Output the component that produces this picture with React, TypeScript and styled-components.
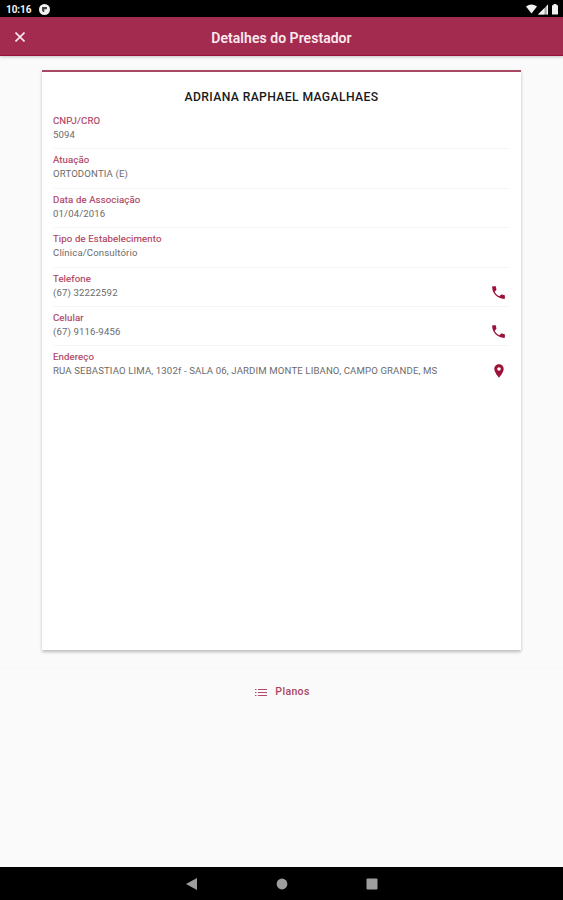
import React from "react";
import styled, { createGlobalStyle } from "styled-components";

const GlobalStyle = createGlobalStyle`
  * { box-sizing: border-box; }
  body { margin: 0; background: #fafafa; font-family: Roboto, "Liberation Sans", sans-serif; }
`;

const Screen = styled.div`
  width: 563px;
  height: 900px;
  display: flex;
  flex-direction: column;
  overflow: hidden;
  background: #fafafa;
`;

const StatusBar = styled.div`
  flex: none;
  height: 17px;
  padding: 1px 4px 0 6px;
  display: flex;
  align-items: center;
  background: #000;
  color: #f2f2f2;
`;

const Clock = styled.span`
  font-size: 10px;
  line-height: 12px;
  font-weight: 700;
  width: 33px;
  padding-top: 1px;
  letter-spacing: -0.1px;
`;

const StatusIcons = styled.div`
  margin-left: auto;
  display: flex;
  align-items: center;
  gap: 1px;
`;

const Header = styled.header`
  flex: none;
  height: 39px;
  display: grid;
  grid-template-columns: 40px 1fr 40px;
  align-items: center;
  background: #a32b50;
  border-bottom: 1px solid #94113b;
  box-shadow: 0 1px 3px rgba(0, 0, 0, 0.22);
  z-index: 1;
`;

const CloseButton = styled.button`
  border: 0;
  padding: 2px 0 0;
  background: none;
  height: 38px;
  display: grid;
  place-items: center;
`;

const Title = styled.h1`
  margin: 3px 0 0;
  text-align: center;
  color: #fbe9ee;
  font-size: 14px;
  line-height: 18px;
  font-weight: 600;
  letter-spacing: 0.04px;
  white-space: nowrap;
`;

const Body = styled.main`
  flex: none;
  height: 613px;
  padding: 14px 42px 0;
  border-bottom: 1px solid #f6f6f6;
`;

const Card = styled.section`
  height: 580px;
  padding: 17px 11px 0;
  background: #fff;
  border-top: 2px solid #a84862;
  box-shadow: 0 2px 3px rgba(0, 0, 0, 0.25);
`;

const Name = styled.h2`
  margin: 0 0 5px;
  text-align: center;
  font-size: 12.2px;
  line-height: 16px;
  font-weight: 500;
  letter-spacing: 0.36px;
  color: #1a1a1a;
  white-space: nowrap;
`;

const Row = styled.div<{ $last?: boolean }>`
  height: 39.4px;
  padding-right: 2px;
  display: flex;
  justify-content: space-between;
  border-bottom: 1px solid ${(p) => (p.$last ? "transparent" : "#f5f5f5")};
`;

const Field = styled.div`
  display: flex;
  flex-direction: column;
  white-space: nowrap;
  padding-top: 4px;
`;

const Label = styled.span`
  font-size: 9.6px;
  line-height: 14px;
  letter-spacing: 0.13px;
  color: #b03f60;
  -webkit-text-stroke: 0.15px #b03f60;
`;

const Value = styled.span`
  font-size: 9.6px;
  line-height: 14px;
  letter-spacing: 0.135px;
  color: #6b6b6b;
`;

const Action = styled.button`
  border: 0;
  padding: 0;
  margin: 16px 0 0;
  height: 18px;
  width: 19px;
  background: none;
  display: grid;
  place-items: center;
`;

const Footer = styled.footer`
  flex: 1;
  display: flex;
  justify-content: center;
  align-items: flex-start;
  padding: 13px 0 0 1px;
`;

const PlansButton = styled.button`
  border: 0;
  padding: 0;
  background: none;
  display: flex;
  align-items: center;
  gap: 7px;
  color: #ab4362;
  font: 500 10.5px/20px Roboto, sans-serif;
  letter-spacing: 0.35px;
`;

const NavBar = styled.nav`
  flex: none;
  height: 33px;
  display: flex;
  justify-content: center;
  align-items: center;
  gap: 76px;
  background: #000;
`;

const PhoneIcon = () => (
  <svg width="17" height="17" viewBox="0 0 24 24" fill="#9d1238">
    <path d="M6.62 10.79c1.44 2.83 3.76 5.14 6.59 6.59l2.2-2.2c.27-.27.67-.36 1.02-.24 1.12.37 2.33.57 3.57.57.55 0 1 .45 1 1V20c0 .55-.45 1-1 1-9.39 0-17-7.61-17-17 0-.55.45-1 1-1h3.5c.55 0 1 .45 1 1 0 1.25.2 2.45.57 3.57.11.35.03.74-.25 1.02l-2.2 2.2z" />
  </svg>
);

const PinIcon = () => (
  <svg width="16" height="16" viewBox="0 0 24 24" fill="#9d1238">
    <path d="M12 2C8.13 2 5 5.13 5 9c0 5.25 7 13 7 13s7-7.75 7-13c0-3.87-3.13-7-7-7zm0 9.7a2.7 2.7 0 0 1 0-5.4 2.7 2.7 0 0 1 0 5.4z" />
  </svg>
);

type Entry = { label: string; value: string; icon?: React.ReactNode };

const entries: Entry[] = [
  { label: "CNPJ/CRO", value: "5094" },
  { label: "Atuação", value: "ORTODONTIA (E)" },
  { label: "Data de Associação", value: "01/04/2016" },
  { label: "Tipo de Estabelecimento", value: "Clínica/Consultório" },
  { label: "Telefone", value: "(67) 32222592", icon: <PhoneIcon /> },
  { label: "Celular", value: "(67) 9116-9456", icon: <PhoneIcon /> },
  {
    label: "Endereço",
    value: "RUA SEBASTIAO LIMA, 1302f - SALA 06, JARDIM MONTE LIBANO, CAMPO GRANDE, MS",
    icon: <PinIcon />,
  },
];

export default function App() {
  return (
    <Screen>
      <GlobalStyle />
      <StatusBar>
        <Clock>10:16</Clock>
        <svg width="11" height="11" viewBox="0 0 11 11">
          <circle cx="5.5" cy="5.5" r="5.5" fill="#f2f2f2" />
          <path d="M3 3h5v2.2H5.3V8H4.2A2.8 2.8 0 0 1 3 5.5z" fill="#444" />
        </svg>
        <StatusIcons>
          <svg width="11" height="10" viewBox="0 0 11 10" fill="#f2f2f2">
            <path d="M0 2.6Q5.5-1.6 11 2.6L5.5 9.5z" />
          </svg>
          <svg width="11" height="11" viewBox="0 0 11 11" fill="#f2f2f2">
            <path d="M0 10.5L10 .5v10z" fill="#aaa" />
            <path d="M0 10.5L6.5 4v6.5zM8.7 1.8L10 .5v10H8.7z" />
          </svg>
          <svg width="9" height="11" viewBox="0 0 9 11" fill="#f2f2f2">
            <path d="M3.5 0h3v1.2H8V10.5H2V1.2h1.5z" />
          </svg>
        </StatusIcons>
      </StatusBar>
      <Header>
        <CloseButton aria-label="Fechar">
          <svg width="10" height="10" viewBox="0 0 10 10" stroke="#fbe9ee" strokeWidth="1.6">
            <path d="M.5.5l9 9M9.5.5l-9 9" />
          </svg>
        </CloseButton>
        <Title>Detalhes do Prestador</Title>
      </Header>
      <Body>
        <Card>
          <Name>ADRIANA RAPHAEL MAGALHAES</Name>
          {entries.map((entry, i) => (
            <Row key={entry.label} $last={i === entries.length - 1}>
              <Field>
                <Label>{entry.label}</Label>
                <Value>{entry.value}</Value>
              </Field>
              {entry.icon && <Action aria-label={entry.label}>{entry.icon}</Action>}
            </Row>
          ))}
        </Card>
      </Body>
      <Footer>
        <PlansButton>
          <svg width="14" height="9" viewBox="0 0 14 9" stroke="#b04a68" strokeWidth="1.2">
            <path d="M1 1.5h1.5M4 1.5H13M1 4.5h1.5M4 4.5H13M1 7.5h1.5M4 7.5H13" />
          </svg>
          Planos
        </PlansButton>
      </Footer>
      <NavBar>
        <svg width="14" height="14" viewBox="0 0 14 14" fill="#9e9e9e">
          <path d="M1 7L12 1v12z" />
        </svg>
        <svg width="14" height="14" viewBox="0 0 14 14" fill="#9e9e9e">
          <circle cx="7" cy="7" r="5.4" />
        </svg>
        <svg width="14" height="14" viewBox="0 0 14 14" fill="#9e9e9e">
          <rect x="1.5" y="1.5" width="11" height="11" rx="1" />
        </svg>
      </NavBar>
    </Screen>
  );
}
